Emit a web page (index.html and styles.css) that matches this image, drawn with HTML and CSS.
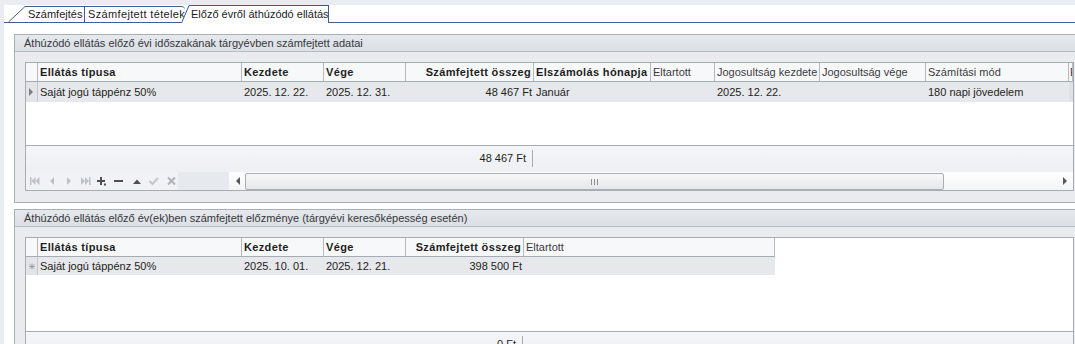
FILE: index.html
```html
<!DOCTYPE html>
<html lang="hu">
<head>
    <meta charset="UTF-8">
    <title>Előző évről áthúzódó ellátás</title>
    <link rel="stylesheet" href="styles.css">
</head>
<body>
    <div class="window">
        <div class="tabs">
            <div class="tab-lead"></div>
            <svg class="slant" width="19" height="17" viewBox="0 0 19 17">
                <polygon points="0,16 17,0.5 19,0.5 19,16" fill="#fff"/>
                <polyline points="0.5,16 17,0.5 19,0.5" fill="none" stroke="#3d5e98"/>
                <line x1="0" y1="16.5" x2="19" y2="16.5" stroke="#3d5e98"/>
            </svg>
            <div class="tab tab-first">Számfejtés</div>
            <div class="tab tab-second">Számfejtett tételek</div>
            <div class="tab-active-wrap">
                <svg class="slant" width="10" height="18" viewBox="0 0 10 18">
                    <polygon points="0,18 8,0.5 10,0.5 10,18" fill="#fff"/>
                    <polyline points="0.5,18 8,0.5 10,0.5" fill="none" stroke="#3d5e98"/>
                </svg>
                <div class="tab tab-active">Előző évről áthúzódó ellátás</div>
            </div>
            <div class="tab-fill"></div>
        </div>

        <div class="content">
            <section class="group">
                <div class="group-head">Áthúzódó ellátás előző évi időszakának tárgyévben számfejtett adatai</div>
                <div class="group-body">
                    <div class="grid grid-main">
                        <div class="row head">
                            <div class="cell ind"></div>
                            <div class="cell w-type bold">Ellátás típusa</div>
                            <div class="cell w-date bold">Kezdete</div>
                            <div class="cell w-date bold">Vége</div>
                            <div class="cell w-sum bold right">Számfejtett összeg</div>
                            <div class="cell w-month bold">Elszámolás hónapja</div>
                            <div class="cell w-dep">Eltartott</div>
                            <div class="cell w-from">Jogosultság kezdete</div>
                            <div class="cell w-to">Jogosultság vége</div>
                            <div class="cell w-mode">Számítási mód</div>
                            <div class="cell rest">E</div>
                        </div>
                        <div class="row data tall">
                            <div class="cell ind">
                                <svg width="5" height="8" viewBox="0 0 5 8"><polygon points="0,0 4,4 0,8" fill="#7b7d82"/></svg>
                            </div>
                            <div class="cell w-type">Saját jogú táppénz 50%</div>
                            <div class="cell w-date">2025. 12. 22.</div>
                            <div class="cell w-date">2025. 12. 31.</div>
                            <div class="cell w-sum right">48 467 Ft</div>
                            <div class="cell w-month">Január</div>
                            <div class="cell w-dep"></div>
                            <div class="cell w-from">2025. 12. 22.</div>
                            <div class="cell w-to"></div>
                            <div class="cell w-mode">180 napi jövedelem</div>
                            <div class="cell rest dim"></div>
                        </div>
                        <div class="empty empty-main"></div>
                        <div class="footer">
                            <div class="foot-pad foot-main"></div>
                            <div class="foot-sum">48 467 Ft</div>
                        </div>
                        <div class="navbar">
                            <svg class="nav" width="152" height="18" viewBox="0 0 152 18">
                                <g fill="#bcc0c7">
                                    <rect x="4" y="5" width="1.5" height="8"/>
                                    <polygon points="5.5,9 9.5,5 9.5,13"/>
                                    <polygon points="9.5,9 13.5,5 13.5,13"/>
                                    <polygon points="24,9 28,5 28,13"/>
                                    <polygon points="41,5 45,9 41,13"/>
                                    <polygon points="55,5 59,9 55,13"/>
                                    <polygon points="59,5 63,9 59,13"/>
                                    <rect x="63" y="5" width="1.5" height="8"/>
                                </g>
                                <g fill="#4d4f53">
                                    <rect x="71" y="8" width="8" height="2"/>
                                    <rect x="74" y="5" width="2" height="8"/>
                                    <rect x="78" y="11.5" width="2" height="2"/>
                                    <rect x="88" y="8" width="9" height="2"/>
                                    <polygon points="107,12 111,7.5 115,12"/>
                                </g>
                                <polyline points="123.5,9 126.5,12 132,6" fill="none" stroke="#c3c7cd" stroke-width="2"/>
                                <g stroke="#aeb2b9" stroke-width="2">
                                    <line x1="142" y1="5.5" x2="149" y2="12.5"/>
                                    <line x1="149" y1="5.5" x2="142" y2="12.5"/>
                                </g>
                            </svg>
                            <div class="nav-gap"></div>
                            <div class="hscroll">
                                <div class="scroll-btn">
                                    <svg width="5" height="8" viewBox="0 0 5 8"><polygon points="5,0 1,4 5,8" fill="#55575b"/></svg>
                                </div>
                                <div class="thumb">
                                    <svg width="7" height="6" viewBox="0 0 7 6">
                                        <g fill="#8d9096"><rect x="0" y="0" width="1" height="6"/><rect x="3" y="0" width="1" height="6"/><rect x="6" y="0" width="1" height="6"/></g>
                                    </svg>
                                </div>
                                <div class="track"></div>
                                <div class="scroll-btn">
                                    <svg width="5" height="8" viewBox="0 0 5 8"><polygon points="0,0 4,4 0,8" fill="#55575b"/></svg>
                                </div>
                            </div>
                        </div>
                    </div>
                </div>
            </section>

            <section class="group group-second">
                <div class="group-head">Áthúzódó ellátás előző év(ek)ben számfejtett előzménye (tárgyévi keresőképesség esetén)</div>
                <div class="group-body">
                    <div class="grid grid-prev">
                        <div class="row head">
                            <div class="cell ind"></div>
                            <div class="cell w-type bold">Ellátás típusa</div>
                            <div class="cell w-date bold">Kezdete</div>
                            <div class="cell w-date bold">Vége</div>
                            <div class="cell w-sum2 bold right">Számfejtett összeg</div>
                            <div class="cell w-dep2">Eltartott</div>
                        </div>
                        <div class="row data">
                            <div class="cell ind">
                                <svg width="7" height="7" viewBox="0 0 7 7">
                                    <g stroke="#999ca3" stroke-width="1">
                                        <line x1="3.5" y1="0" x2="3.5" y2="7"/>
                                        <line x1="0" y1="3.5" x2="7" y2="3.5"/>
                                        <line x1="1" y1="1" x2="6" y2="6"/>
                                        <line x1="6" y1="1" x2="1" y2="6"/>
                                    </g>
                                </svg>
                            </div>
                            <div class="cell w-type">Saját jogú táppénz 50%</div>
                            <div class="cell w-date">2025. 10. 01.</div>
                            <div class="cell w-date">2025. 12. 21.</div>
                            <div class="cell w-sum2 right">398 500 Ft</div>
                            <div class="cell w-dep2"></div>
                        </div>
                        <div class="empty empty-prev"></div>
                        <div class="footer">
                            <div class="foot-pad foot-prev"></div>
                            <div class="foot-sum">0 Ft</div>
                        </div>
                    </div>
                </div>
            </section>
        </div>
    </div>
</body>
</html>
```

FILE: styles.css
```css
body {
    margin: 0;
    height: 344px;
    overflow: hidden;
    background-color: #e9ecf1;
    font-family: "Liberation Sans", Arial, sans-serif;
    font-size: 11px;
    color: #1e1f22;
}
.window {
    margin: 5px 0 0 4px;
    width: 1090px;
    height: 339px;
    background-color: #fff;
}

/* tab strip */
.tabs {
    display: flex;
    align-items: flex-end;
    height: 18px;
}
.tab-lead {
    width: 4px;
    height: 17px;
    box-sizing: border-box;
    border-bottom: 1px solid #3d5e98;
}
.slant {
    display: block;
    flex: none;
}
.tab {
    box-sizing: border-box;
    height: 17px;
    line-height: 15px;
    white-space: nowrap;
    overflow: hidden;
    background-color: #fff;
    border-top: 1px solid #3d5e98;
    border-bottom: 1px solid #3d5e98;
    color: #1b1c1f;
}
.tab-first {
    width: 58px;
    padding-left: 1px;
    border-right: 1px solid #3d5e98;
}
.tab-second {
    width: 100px;
    padding-left: 3px;
    letter-spacing: 0.35px;
    border-top-right-radius: 4px;
}
.tab-active-wrap {
    display: flex;
    align-items: flex-end;
    margin-left: -4px;
}
.tab-active {
    width: 138px;
    height: 18px;
    line-height: 17px;
    border-bottom: none;
    border-right: 1px solid #3d5e98;
}
.tab-fill {
    flex: 1;
    height: 17px;
    box-sizing: border-box;
    border-bottom: 1px solid #3d5e98;
}

/* groups */
.content {
    padding: 11px 0 0 10px;
}
.group {
    width: 1070px;
    border: 1px solid #a9aeb7;
    background-color: #e9ebef;
}
.group-second {
    margin-top: 6px;
}
.group-head {
    height: 16px;
    line-height: 16px;
    padding-left: 9px;
    background: linear-gradient(#e5e8ec, #dcdfe4);
    border-bottom: 1px solid #b8bdc5;
    color: #35373b;
}
.group-body {
    padding: 10px 0 11px 10px;
}

/* grids */
.grid {
    width: 1049px;
    box-sizing: border-box;
    border: 1px solid #a5acb6;
    background-color: #fff;
}
.row {
    display: flex;
}
.cell {
    box-sizing: border-box;
    flex: none;
    padding: 0 2px;
    white-space: nowrap;
    overflow: hidden;
}
.head .cell {
    height: 19px;
    line-height: 18px;
    background-color: #f7f8fa;
    border-right: 1px solid #b4bac3;
    border-bottom: 1px solid #a5acb6;
    color: #3a3c40;
}
.head .bold {
    font-weight: bold;
    letter-spacing: 0.35px;
    color: #1e1f22;
}
.data .cell {
    height: 18px;
    line-height: 18px;
    background-color: #e7e8eb;
}
.data.tall .cell {
    height: 20px;
    line-height: 20px;
}
.data .ind {
    display: flex;
    align-items: center;
    padding-left: 3px;
    border-right: 1px solid #c3c7ce;
    background-color: #e2e4e8;
}
.data .dim {
    background-color: #dfe1e5;
}
.right {
    text-align: right;
}
.ind { width: 12px; }
.w-type { width: 204px; }
.w-date { width: 82px; }
.w-sum { width: 128px; }
.w-month { width: 117px; }
.w-dep { width: 64px; }
.w-from { width: 105px; }
.w-to { width: 106px; }
.w-mode { width: 143px; }
.w-sum2 { width: 118px; }
.w-dep2 { width: 251px; }
.rest {
    flex: 1;
    padding: 0 1px;
}
.empty-main { height: 43px; }
.empty-prev { height: 56px; }

.footer {
    display: flex;
    height: 26px;
    border-top: 1px solid #a5acb6;
    background: linear-gradient(#f4f5f8, #eef0f3);
}
.foot-main { width: 379px; }
.foot-prev { width: 379px; }
.foot-sum {
    box-sizing: border-box;
    width: 128px;
    height: 17px;
    margin-top: 4px;
    padding-right: 6px;
    line-height: 17px;
    text-align: right;
    border-right: 1px solid #a5acb6;
}
.grid-prev .foot-sum {
    width: 118px;
}

/* navigator and scroll bar */
.navbar {
    display: flex;
    height: 18px;
}
.nav {
    display: block;
    background-color: #f1f2f5;
}
.nav-gap {
    width: 51px;
    background-color: #e6e9ed;
}
.hscroll {
    flex: 1;
    display: flex;
    align-items: center;
    background: linear-gradient(#ffffff, #f3f4f6);
}
.scroll-btn {
    width: 16px;
    height: 18px;
    display: flex;
    align-items: center;
    justify-content: center;
}
.thumb {
    width: 699px;
    height: 17px;
    margin-top: 1px;
    box-sizing: border-box;
    border: 1px solid #a9aeb6;
    border-radius: 2px;
    background: linear-gradient(#f7f7f8, #e6e7ea);
    display: flex;
    align-items: center;
    justify-content: center;
}
.thumb svg {
    display: block;
}
.track {
    flex: 1;
}
```
